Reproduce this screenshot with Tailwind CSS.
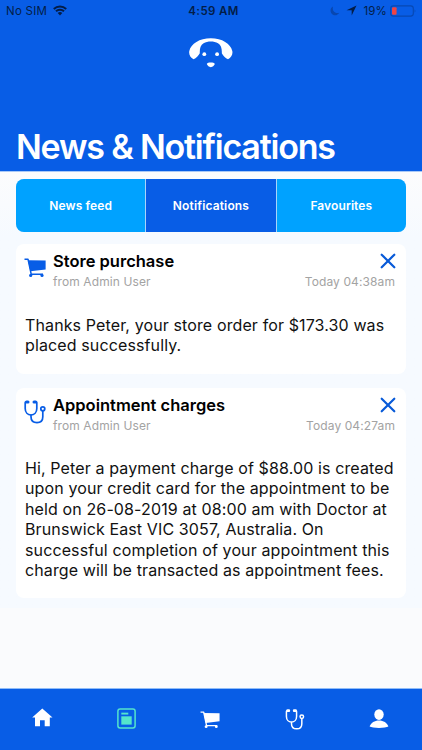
<!DOCTYPE html>
<html lang="en">
<head>
<meta charset="utf-8">
<title>News &amp; Notifications</title>
<script src="https://cdn.jsdelivr.net/npm/@tailwindcss/browser@4"></script>
</head>
<body class="w-[422px] h-[750px] overflow-hidden font-['Inter',sans-serif] bg-[#fafbfd]">
<svg class="hidden">
  <symbol id="cart" viewBox="0 0 22 20">
    <path d="M0.5 1.2H4L7.2 16.2H19" fill="none" stroke="currentColor" stroke-width="1.5" stroke-linejoin="round"/>
    <path d="M4 2.2L21.6 2.6V11.4L6.3 13.2Z" fill="currentColor"/>
    <circle cx="6.7" cy="17.4" r="1.6" fill="currentColor"/><circle cx="18" cy="17.4" r="1.6" fill="currentColor"/>
  </symbol>
  <symbol id="steth" viewBox="0 0 22 24">
    <g fill="none" stroke="currentColor" stroke-width="1.7" stroke-linecap="round">
      <path d="M4 1.9H2.2Q1.2 1.9 1.2 3V8.6C1.2 12.5 3.8 15 7 15S12.8 12.5 12.8 8.6V3Q12.8 1.9 11.8 1.9H10"/>
      <path d="M7 15V16.8C7 20.5 9.5 22.7 13 22.7S18.8 20.5 18.8 16.8V11"/>
      <circle cx="18.8" cy="8.8" r="2"/>
    </g>
    <path d="M2.5 1.9H4M10 1.9H11.7" stroke="currentColor" stroke-width="3" stroke-linecap="round"/>
  </symbol>
  <symbol id="close" viewBox="0 0 16 16"><path d="M1.7 1.7L14.3 14.3M14.3 1.7L1.7 14.3" stroke="currentColor" stroke-width="2.2" stroke-linecap="round"/></symbol>
</svg>
<div class="flex flex-col h-full">
  <header class="h-[171px] shrink-0 bg-[#085de6] flex flex-col">
    <div class="h-[22px] grid grid-cols-3 items-center text-[11.5px] leading-[22px] text-[#031d48] whitespace-nowrap">
      <div class="flex items-center pl-[6px]">
        <span class="tracking-[0.25px]">No SIM</span>
        <svg class="ml-[6px] mb-px w-[14px] h-[11px]" viewBox="0 0 14 11"><path d="M0.8 4C4.3 0.5 9.7 0.5 13.2 4M3 6.3C5.2 4.1 8.8 4.1 11 6.3" fill="none" stroke="#031d48" stroke-width="2"/><path d="M4.7 8C6 6.8 8 6.8 9.3 8L7 10.4Z" fill="#031d48"/></svg>
      </div>
      <div class="text-center font-semibold pl-[5px]"><span class="tracking-[0.35px]">4:59 AM</span></div>
      <div class="flex items-center justify-end pr-[5px]">
        <svg class="w-[10px] h-[10px] mr-[6px] mb-px" viewBox="0 0 10 10"><path d="M3 0.5C-0.5 2.3 0 7 3 8.8C5.4 10.1 8 9 9.3 6.8C4.8 7.8 1.8 4.5 3 0.5Z" fill="#0847b0"/></svg>
        <svg class="w-[11px] h-[11px] mr-[6px] mb-px" viewBox="0 0 11 11"><path d="M10.5 0.5L0.5 5.2H5.7V10.5Z" fill="#031d48"/></svg>
        <span class="tracking-[0.15px]">19%</span>
        <svg class="ml-[3px] mb-px w-[27px] h-[12px]" viewBox="0 0 27 12"><rect x="0.7" y="0.9" width="22.6" height="10.2" rx="2.6" fill="none" stroke="#0748b2" stroke-width="1.1"/><rect x="2" y="2.2" width="4.6" height="7.6" rx="1" fill="#ef4444"/><path d="M24.6 4.2Q26.4 6 24.6 7.8Z" fill="#0748b2"/></svg>
      </div>
    </div>
    <svg class="w-[44px] h-[30px] mt-[16px] ml-[189px]" viewBox="0 0 44 30">
      <path d="M4.6 21.3C1.4 19.5 -0.4 16.5 0.3 13C2 5.8 10.5 0.3 21.8 0.3S41.6 5.8 43.3 13C44 16.5 42.3 19.5 39 21.3C36.4 20.3 34 17.8 32.8 15.3C33 10.5 32.2 7 29 5.2C25 3 18.6 3 14.6 5.2C11.4 7 10.6 10.5 10.8 15.3C9.5 17.8 7.2 20.3 4.6 21.3Z" fill="#fff"/>
      <circle cx="15.3" cy="16.2" r="1.9" fill="#fff"/><circle cx="28.1" cy="16.2" r="1.9" fill="#fff"/>
      <path d="M17.9 25.8C18.4 24 25.2 24 25.7 25.8C26 27 23.3 29.2 21.8 29.2S17.6 27 17.9 25.8Z" fill="#fff"/>
    </svg>
    <h1 class="mt-[57px] ml-[16px] text-[34px] leading-[44px] font-semibold tracking-[-1.2px] text-white whitespace-nowrap"><span>News &amp; Notifications</span></h1>
  </header>
  <main class="h-[437px] shrink-0 border-t border-[#a9c9f7] bg-linear-to-b from-[#fcfcfd] to-[#f6faff] to-15% px-[16px] pt-[7px]">
    <nav class="h-[53px] w-[390px] rounded-[8px] overflow-hidden flex gap-px bg-[#a8d4fa] text-[12px] font-semibold text-white text-center leading-[53px]">
      <div class="flex-1 bg-[#00a2ff]"><span class="tracking-[0.1px]">News feed</span></div>
      <div class="flex-1 bg-[#085de6]"><span class="tracking-[0.15px]">Notifications</span></div>
      <div class="flex-1 bg-[#00a2ff]"><span class="tracking-[0.1px]">Favourites</span></div>
    </nav>
    <article class="mt-[12px] h-[130px] w-[390px] rounded-[8px] bg-white pl-[9px] pr-[11px] whitespace-nowrap">
      <div class="flex pt-[7px] h-[54px]">
        <svg class="w-[22px] h-[20px] mt-[7px] ml-[-1px] mr-[7px] text-[#085de6]"><use href="#cart"/></svg>
        <div class="flex-1">
          <h2 class="text-[16.5px] leading-[21px] font-semibold text-black"><span>Store purchase</span></h2>
          <p class="text-[12px] leading-[19px] text-[#a3a3a3]"><span class="tracking-[0.1px]">from Admin User</span></p>
        </div>
        <div class="flex flex-col items-end">
          <svg class="w-[16px] h-[16px] mt-[2px] mr-[-1px] text-[#085ad8]"><use href="#close"/></svg>
          <p class="mt-[3px] text-[12px] leading-[19px] text-[#a3a3a3]"><span class="tracking-[0.1px]">Today 04:38am</span></p>
        </div>
      </div>
      <p class="mt-[17px] text-[16px] leading-[20.4px] tracking-[0.12px] text-[#111]"><span>Thanks Peter, your store order for $173.30 was<br>placed successfully.</span></p>
    </article>
    <article class="mt-[14px] h-[210px] w-[390px] rounded-[8px] bg-white pl-[9px] pr-[11px] whitespace-nowrap">
      <div class="flex pt-[7px] h-[54px]">
        <svg class="w-[22px] h-[24px] mt-[5px] ml-[-1px] mr-[7px] text-[#085de6]"><use href="#steth"/></svg>
        <div class="flex-1">
          <h2 class="text-[16.5px] leading-[21px] font-semibold text-black"><span>Appointment charges</span></h2>
          <p class="text-[12px] leading-[19px] text-[#a3a3a3]"><span class="tracking-[0.1px]">from Admin User</span></p>
        </div>
        <div class="flex flex-col items-end">
          <svg class="w-[16px] h-[16px] mt-[2px] mr-[-1px] text-[#085ad8]"><use href="#close"/></svg>
          <p class="mt-[3px] text-[12px] leading-[19px] text-[#a3a3a3]"><span class="tracking-[0.1px]">Today 04:27am</span></p>
        </div>
      </div>
      <p class="mt-[16px] text-[16px] leading-[20.4px] tracking-[0.12px] text-[#111]"><span>Hi, Peter a payment charge of $88.00 is created<br>upon your credit card for the appointment to be<br>held on 26-08-2019 at 08:00 am with Doctor at<br>Brunswick East VIC 3057, Australia. On<br>successful completion of your appointment this<br>charge will be transacted as appointment fees.</span></p>
    </article>
  </main>
  <footer class="mt-auto h-[62px] border-t border-[#8fbcf8] bg-[#085de6] grid grid-cols-5 justify-items-center pt-[19px] text-white">
    <svg class="w-[21px] h-[20px]" viewBox="0 0 21 20"><path d="M10.3 0.5L20.5 9.6H17.8V18.2H12.7V12.2H8V18.2H3V9.6H0.2Z" fill="#fff"/></svg>
    <svg class="w-[19px] h-[21px]" viewBox="0 0 19 21"><rect x="0.9" y="1" width="17.2" height="19" rx="2.2" fill="none" stroke="#54e4cc" stroke-width="1.5"/><path d="M4.3 5.6H11.3" stroke="#54e4cc" stroke-width="1.9"/><path d="M4.3 8.3H14.7V16.6H4.3Z" fill="#54e4cc"/></svg>
    <svg class="w-[20px] h-[18px] mt-[3px] mr-px"><use href="#cart"/></svg>
    <svg class="w-[20px] h-[21px] mt-px"><use href="#steth"/></svg>
    <svg class="w-[20px] h-[20px] mt-px mr-px" viewBox="0 0 20 20"><ellipse cx="10" cy="5.6" rx="4.7" ry="5.3" fill="#fff"/><path d="M0.6 17.6C2 13.8 5.5 11.5 10 11.5S18 13.8 19.4 17.6C16.5 19.4 3.5 19.4 0.6 17.6Z" fill="#fff"/></svg>
  </footer>
</div>
</body>
</html>
